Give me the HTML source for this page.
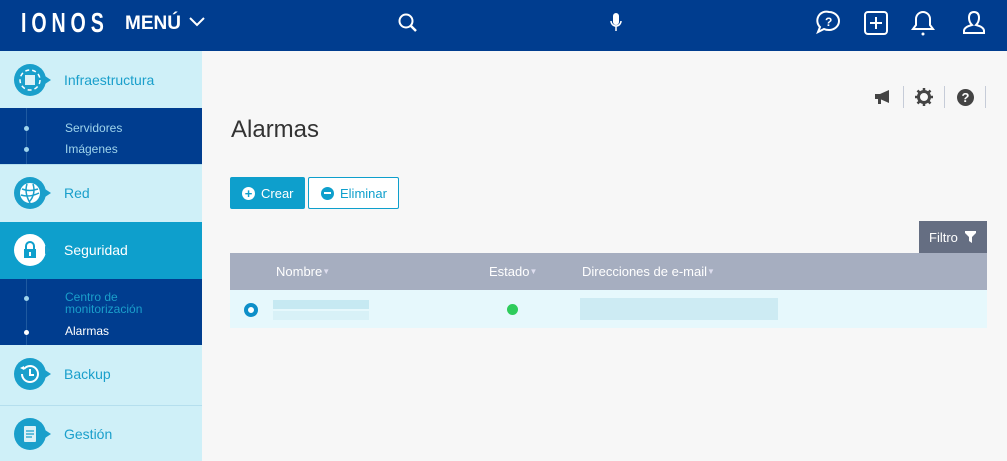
<!DOCTYPE html>
<html><head><meta charset="utf-8"><style>
*{margin:0;padding:0;box-sizing:border-box}
body{width:1007px;height:461px;overflow:hidden;font-family:"Liberation Sans",sans-serif;background:#f7f7f7;position:relative}
.hdr{position:absolute;left:0;top:0;width:1007px;height:51px;background:#003d8f;color:#fff}
.side{position:absolute;left:0;top:51px;width:202px;height:410px;background:#cff0f8}
.it{position:absolute;left:0;width:202px;color:#1a9fcb;font-size:14px}
.it .ic{position:absolute;left:14px;width:32px;height:32px;border-radius:50%;background:#1a9fcb}
.it .ic:after{content:"";position:absolute;right:-5px;top:12px;border-left:6px solid #1a9fcb;border-top:4px solid transparent;border-bottom:4px solid transparent}
.it .ic svg{position:absolute;left:0;top:0}
.it span{position:absolute;left:64px}
.sub{position:absolute;left:0;width:202px;background:#003d8f;font-size:12px;color:#9fd4ec}
.sub .l{position:absolute;left:26px;top:0;bottom:0;border-left:1px solid #1f5aa0}
.dot{position:absolute;left:24px;width:5px;height:5px;border-radius:50%;background:#9fd4ec}
.sub span{position:absolute;left:65px}
.btn{position:absolute;top:177px;height:32px;font-size:13px;display:flex;align-items:center;gap:6px;padding-left:12px}
.th{position:absolute;left:230px;top:253px;width:757px;height:37px;background:#a6aec0;color:#fff;font-size:13px}
.th span{position:absolute;top:11px}
.th i{font-style:normal;font-size:8px;color:#dde;vertical-align:2px}
.row{position:absolute;left:230px;top:290px;width:757px;height:38px;background:#e6f8fc}
</style></head><body>
<div class="hdr">
<div style="position:absolute;left:21px;top:7px;font-size:28px;letter-spacing:7px;font-weight:bold;transform:scaleX(.7);transform-origin:left">IONOS</div>
<div style="position:absolute;left:125px;top:13px;font-size:19px;font-weight:bold">MENÚ</div>
<svg style="position:absolute;left:188px;top:16px" width="18" height="12"><path d="M2 2l7 7 7-7" stroke="#fff" stroke-width="2" fill="none"/></svg>
<svg style="position:absolute;left:397px;top:12px" width="22" height="22"><circle cx="9" cy="9" r="6.5" stroke="#fff" stroke-width="2" fill="none"/><path d="M14 14l5 5" stroke="#fff" stroke-width="2.5"/></svg>
<svg style="position:absolute;left:608px;top:11px" width="16" height="24"><rect x="5" y="2" width="6" height="12" rx="3" fill="#fff"/><path d="M3 10a5 5 0 0010 0M8 15v5" stroke="#fff" stroke-width="1.5" fill="none"/></svg>
<svg style="position:absolute;left:815px;top:9px" width="28" height="28"><path d="M14 3a10 9 0 110 18c-2 0-4-.5-5-1l-6 3 2-5a9 9 0 019-15z" stroke="#fff" stroke-width="2" fill="none"/><text x="10" y="17" fill="#fff" font-size="12" font-weight="bold" font-family="Liberation Sans">?</text></svg>
<svg style="position:absolute;left:863px;top:10px" width="26" height="26"><rect x="2" y="2" width="22" height="22" rx="3" stroke="#fff" stroke-width="2" fill="none"/><path d="M13 7v12M7 13h12" stroke="#fff" stroke-width="2"/></svg>
<svg style="position:absolute;left:910px;top:9px" width="26" height="28"><path d="M13 3a7 7 0 017 7v6l3 4H3l3-4v-6a7 7 0 017-7z" stroke="#fff" stroke-width="2" fill="none"/><circle cx="13" cy="25" r="1.5" fill="#fff"/></svg>
<svg style="position:absolute;left:961px;top:9px" width="26" height="28"><path d="M13 3c4 0 5 3 5 6s-1 5-3 7c4 1 8 3 8 6v2H3v-2c0-3 4-5 8-6-2-2-3-4-3-7s1-6 5-6z" stroke="#fff" stroke-width="2" fill="none"/></svg>
</div>
<div class="side">
<div class="it" style="top:0;height:57px"><div class="ic" style="top:13px"><svg width="32" height="32"><circle cx="16" cy="16" r="10" stroke="#fff" stroke-width="1.5" stroke-dasharray="4 3" fill="none"/><rect x="11" y="11" width="10" height="10" fill="#fff" opacity=".85"/></svg></div><span style="top:21px">Infraestructura</span></div>
<div class="sub" style="top:57px;height:56px"><div class="l"></div><div class="dot" style="top:18px"></div><span style="top:13px">Servidores</span><div class="dot" style="top:39px"></div><span style="top:34px">Imágenes</span></div>
<div class="it" style="top:113px;height:57px;border-top:1px solid #b5dfee"><div class="ic" style="top:12px"><svg width="32" height="32"><circle cx="16" cy="16" r="10" fill="#fff"/><path d="M8 12c5 2 10 2 16 0M7 18c6 2 12 1 18-2M13 7c-2 6-1 12 3 19M19 7c2 6 1 13-4 18" stroke="#1a9fcb" stroke-width="1.5" fill="none"/></svg></div><span style="top:20px">Red</span></div>
<div class="it" style="top:171px;height:57px;background:#0e9fcc;color:#fff"><div class="ic" style="top:12px;background:#fff"><svg width="32" height="32"><path d="M12 15v-3a4 4 0 018 0v3" stroke="#0e9fcc" stroke-width="2" fill="none"/><rect x="10" y="15" width="12" height="9" fill="#0e9fcc"/><rect x="15" y="18" width="2" height="4" fill="#fff"/></svg></div><span style="top:20px">Seguridad</span></div>
<div style="position:absolute;left:22px;top:228px;border-top:6px solid #0e9fcc;border-left:6px solid transparent;border-right:6px solid transparent"></div>
<div class="sub" style="top:228px;height:66px"><div class="l"></div><div class="dot" style="top:17px"></div><span style="top:12px;line-height:12px;color:#1a9fcb">Centro de<br>monitorización</span><div class="dot" style="top:51px;background:#fff"></div><span style="top:45px;color:#fff">Alarmas</span></div>
<div class="it" style="top:295px;height:59px"><div class="ic" style="top:12px"><svg width="32" height="32"><path d="M8 16a8 8 0 108-8 8 8 0 00-6 3" stroke="#fff" stroke-width="2" fill="none"/><path d="M6 10l4 2 0-4z" fill="#fff"/><path d="M16 11v6h4" stroke="#fff" stroke-width="2" fill="none"/></svg></div><span style="top:20px">Backup</span></div>
<div class="it" style="top:354px;height:56px;border-top:1px solid #b5dfee"><div class="ic" style="top:12px"><svg width="32" height="32"><rect x="10" y="8" width="12" height="16" rx="1" fill="#fff" opacity=".85"/><path d="M12 13h8M12 16h8M12 19h6" stroke="#1a9fcb" stroke-width="1.2"/></svg></div><span style="top:20px">Gestión</span></div>
</div>
<svg style="position:absolute;left:874px;top:88px" width="18" height="18"><path d="M1 6h5l9-4v13l-9-4H1z" fill="#444"/><rect x="4" y="11" width="3" height="5" fill="#444"/></svg>
<div style="position:absolute;left:903px;top:86px;width:1px;height:22px;background:#c6ccd8"></div>
<svg style="position:absolute;left:914px;top:87px" width="20" height="20"><circle cx="10" cy="10" r="5.5" stroke="#444" stroke-width="3" fill="none"/><path d="M10 1v4M10 15v4M1 10h4M15 10h4M3.5 3.5l3 3M13.5 13.5l3 3M3.5 16.5l3-3M13.5 6.5l3-3" stroke="#444" stroke-width="2.5"/></svg>
<div style="position:absolute;left:944px;top:86px;width:1px;height:22px;background:#c6ccd8"></div>
<div style="position:absolute;left:957px;top:89px;width:17px;height:17px;border-radius:50%;background:#444;color:#fff;font-size:13px;font-weight:bold;text-align:center;line-height:17px">?</div>
<div style="position:absolute;left:985px;top:86px;width:1px;height:22px;background:#c6ccd8"></div>
<div style="position:absolute;left:231px;top:116px;font-size:24px;color:#333">Alarmas</div>
<div class="btn" style="left:230px;width:75px;background:#0e9fcc;color:#fff;border-radius:2px"><span style="width:13px;height:13px;border-radius:50%;background:#fff;color:#0e9fcc;font-size:13px;line-height:13px;text-align:center;font-weight:bold">+</span>Crear</div>
<div class="btn" style="left:308px;width:91px;border:1px solid #0e9fcc;color:#0e9fcc;background:#fff;border-radius:2px"><span style="width:13px;height:13px;border-radius:50%;background:#0e9fcc;position:relative"><i style="position:absolute;left:3px;top:5.5px;width:7px;height:2px;background:#fff"></i></span>Eliminar</div>
<div style="position:absolute;left:919px;top:221px;width:68px;height:32px;background:#656e82;color:#fff;font-size:13px;padding:9px 0 0 10px">Filtro <svg style="position:absolute;left:46px;top:10px" width="11" height="12"><path d="M0 0h11v2L7 6v6L4 10V6L0 2z" fill="#fff"/></svg></div>
<div class="th"><span style="left:46px">Nombre<i>▼</i></span><span style="left:259px">Estado<i>▼</i></span><span style="left:352px">Direcciones de e-mail<i>▼</i></span></div>
<div class="row">
<div style="position:absolute;left:14px;top:13px;width:14px;height:14px;border-radius:50%;border:4px solid #0e8fc8;background:#fff"></div>
<div style="position:absolute;left:43px;top:10px;width:96px;height:9px;background:#c6e9f2"></div>
<div style="position:absolute;left:43px;top:21px;width:96px;height:9px;background:#d8f1f7"></div>
<div style="position:absolute;left:277px;top:14px;width:11px;height:11px;border-radius:50%;background:#2ecc5b"></div>
<div style="position:absolute;left:350px;top:8px;width:198px;height:22px;background:#cdebf3"></div>
</div>
</body></html>
